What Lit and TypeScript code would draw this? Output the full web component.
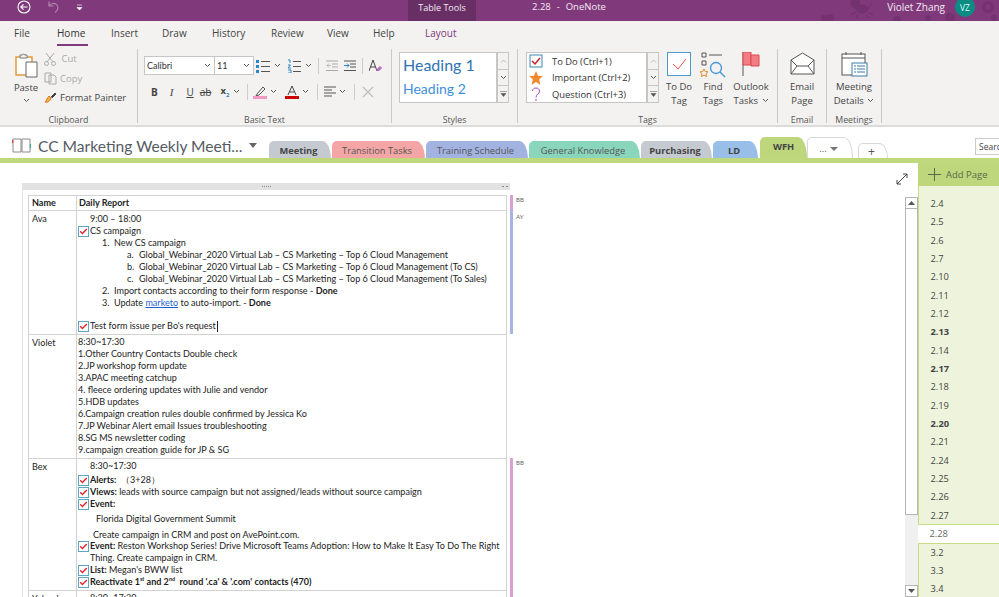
import { LitElement, html, css, svg } from "lit";
import { customElement } from "lit/decorators.js";

const chev = html`<svg class="chev" width="7" height="5" viewBox="0 0 7 5"><path d="M1 1l2.500 2.500L6 1" fill="none" stroke="#555" stroke-width="1"/></svg>`;
const check = html`<svg class="chk" width="11" height="11" viewBox="0 0 11 11"><rect x=".5" y=".5" width="10" height="10" fill="#fff" stroke="#5ba6c4"/><path d="M2.200 5.200l2.200 2.400 4.400-4.600" fill="none" stroke="#e0262e" stroke-width="1.400"/></svg>`;
const scrollBtns = html`<div class="gs"><i><svg width="7" height="4" viewBox="0 0 7 4"><path d="M1 3.500L3.500 1 6 3.500" fill="none" stroke="#bbb"/></svg></i><i>${chev}</i><i><svg width="7" height="6" viewBox="0 0 7 6"><path d="M0 .5h7M1 2.500h5L3.500 5.500z" fill="#555" stroke="#555" stroke-width=".5"/></svg></i></div>`;

const pages: [string, string?][] = [
  ["2.4"],["2.5"],["2.6"],["2.7"],["2.10"],["2.11"],["2.12"],["2.13","b"],["2.14"],["2.17","b"],["2.18"],["2.19"],["2.20","b"],["2.21"],["2.24"],["2.25"],["2.26"],["2.27"],["2.28","cur"],["3.2"],["3.3"],["3.4"],
];
const tabs = [
  ["Meeting", "#c5cad1", 62, true],
  ["Transition Tasks", "#f4a6a6", 93, false],
  ["Training Schedule", "#a2b3e2", 102, false],
  ["General Knowledge", "#8ad6bd", 111, false],
  ["Purchasing", "#c5cad1", 71, true],
  ["LD", "#99bfe8", 45, true],
] as [string, string, number, boolean][];
const menu: [string, number, string?][] = [
  ["File", 43], ["Home", 31, "on"], ["Insert", 51, "ins"], ["Draw", 50], ["History", 59], ["Review", 56], ["View", 46], ["Help", 52], ["Layout", 40, "lay"],
];

@customElement("app-root")
export class AppRoot extends LitElement {
  static styles = css`
    :host { display: block; width: 999px; height: 597px; overflow: hidden; background: #fff; font-family: "Open Sans", "Liberation Sans", sans-serif; color: #444; }
    * { box-sizing: border-box; }
    svg { display: block; flex: none; }
    .title { height: 21px; background: #80397b; position: relative; display: flex; color: #f4eaf3; font-size: 9.5px; overflow: hidden; }
    .title > div { position: relative; }
    .title > .doodle { position: absolute; left: 800px; top: 0; }
    .qat { display: flex; align-items: center; gap: 16px; padding: 0 0 7px 17px; width: 408px; }
    .tt { width: 68px; height: 21px; background: #682f65; display: flex; align-items: center; justify-content: center; font-size: 9px; padding-bottom: 7px; }
    .doc { margin-left: 56px; line-height: 13px; word-spacing: 0.5px; }
    .user { margin-left: auto; display: flex; align-items: flex-start; gap: 10px; padding-right: 24px; font-size: 10px; line-height: 15px; }
    .vz { width: 20px; height: 20px; border-radius: 50%; background: #0b8c83; color: #dff; font-size: 8.5px; display: flex; align-items: center; justify-content: center; margin-top: -3px; }
    .menu { height: 25px; background: #f3f2f1; display: flex; padding-left: 14px; font-size: 10px; color: #444; }
    .menu span { height: 25px; line-height: 24px; position: relative; flex: none; }
    .menu .on { color: #333; }
    .menu .on::after { content: ""; position: absolute; left: 0; right: 0; bottom: 0; height: 2px; background: #80397b; }
    .menu .ins { margin-left: 23px; }
    .menu .lay { color: #80397b; }
    .ribbon { height: 81px; background: #f3f2f1; border-bottom: 2px solid #dcdcdc; display: flex; font-size: 9.5px; color: #444; }
    .grp { height: 74px; margin-top: 3px; border-right: 1px solid #c9c9c9; display: flex; flex-direction: column; flex: none; }
    .grp .body { height: 60px; flex: none; display: flex; }
    .grp .lab { height: 13px; margin-top: 5px; text-align: center; font-size: 8.8px; color: #555; line-height: 12px; }
    .g-clip { width: 138px; } .g-basic { width: 254px; } .g-styles { width: 126px; } .g-tags { width: 260px; } .g-email { width: 49px; } .g-meet { width: 55px; }
    .g-styles .body { padding-left: 7px; }
    .g-tags .body { padding-left: 8px; }
    .g-email .body, .g-meet .body { justify-content: center; }
    .paste { width: 40px; margin-left: 6px; display: flex; flex-direction: column; align-items: center; padding-top: 3px; font-size: 9.5px; }
    .paste span { margin-top: 3px; }
    .paste .chev { margin-top: 4px; }
    .clipc { display: flex; flex-direction: column; font-size: 9.5px; margin-left: -2px; }
    .clipc div { height: 19.5px; display: flex; align-items: center; gap: 3px; }
    .dis { color: #aaa; }
    .bt { padding: 7px 0 0 6px; display: flex; flex-direction: column; gap: 7px; }
    .bt .r { display: flex; align-items: center; height: 19px; }
    .sel { height: 19px; background: #fff; border: 1px solid #c6c6c6; display: flex; align-items: center; justify-content: space-between; font-size: 9px; padding: 0 3px 0 2px; font-family: "Lato", sans-serif; color: #333; }
    .sel.f { width: 71px; } .sel.s { width: 39px; border-left: 0; }
    .vs { width: 1px; height: 16px; background: #ccc; flex: none; }
    .c1 { margin: 0 6px 0 4px; }
    .c2 { margin: 0 8px 0 3px; }
    .c3 { margin: 0 8px 0 2px; }
    .c0 { margin: 0 7px 0 4px; }
    .ml2 { margin-left: 2px; } .ml5 { margin-left: 5px; } .ml6 { margin-left: 6px; } .ml7 { margin-left: 7px; }
    .vm { margin: 0 6px 0 5px; }
    .fb { margin-left: 7px; font-size: 10px; font-weight: 700; }
    .fi { margin-left: 12px; font-family: "Liberation Serif", serif; font-size: 11px; font-style: italic; }
    .fu { margin-left: 13px; font-size: 10px; text-decoration: underline; }
    .fs { margin-left: 6px; font-size: 10px; text-decoration: line-through; }
    .fx { margin-left: 9px; font-size: 9.5px; font-weight: 700; }
    .fx sub { font-size: 6px; color: #2e86c8; }
    .gal { background: #fff; border: 1px solid #c6c6c6; height: 51px; margin-top: 3px; flex: none; }
    .gal.st { width: 98px; }
    .gal.tl { width: 121px; }
    .h1 { font-family: "Lato", sans-serif; font-size: 16px; color: #2e74b5; line-height: 23px; padding-left: 3px; }
    .h2 { font-family: "Lato", sans-serif; font-size: 14px; color: #3f8fd8; line-height: 26px; padding-left: 3px; }
    .gs { width: 12px; height: 51px; margin-top: 3px; border: 1px solid #c6c6c6; display: flex; flex-direction: column; background: #f3f2f1; flex: none; }
    .gs i { flex: 1; display: flex; align-items: center; justify-content: center; border-bottom: 1px solid #c6c6c6; font-style: normal; }
    .gs i:last-child { border-bottom: 0; }
    .tg { display: flex; align-items: center; height: 16.5px; font-size: 9.4px; color: #333; gap: 9px; padding-left: 2px; }
    .big { display: flex; flex-direction: column; align-items: center; text-align: center; line-height: 13.5px; font-size: 9.5px; padding-top: 3px; flex: none; }
    .big .ico { height: 28px; display: flex; align-items: flex-start; }
    .big .chev { display: inline-block; margin: 0 0 1px 1px; }
    .b-todo { width: 34px; margin-left: 3px; }
    .b-find { width: 34px; }
    .b-out { width: 42px; }
    .nb { height: 36px; position: relative; display: flex; align-items: flex-end; border-bottom: 5px solid #c0d87c; }
    .nbt { width: 269px; flex: none; display: flex; align-items: center; height: 31px; padding-left: 12px; font-size: 15.6px; color: #565b64; font-family: "Lato", sans-serif; gap: 7px; align-self: flex-start; margin-top: 3px; white-space: nowrap; }
    .tab { height: 17px; border-radius: 5px 9px 0 0 / 5px 100% 0 0; font-size: 9.3px; color: #555; display: flex; align-items: center; justify-content: center; margin-right: 1px; flex: none; padding: 1px 3px 0 0; }
    .tab.b { font-weight: 700; color: #444; }
    .tab.wfh { height: 21px; width: 47px; background: #bed77c; font-weight: 700; color: #444; margin-left: 1px; margin-right: 0; padding: 0 0 3px; }
    .tab.more { height: 21px; width: 46px; background: #fff; border: 1px solid #d8d8d8; border-bottom: 0; gap: 3px; margin-right: 5px; }
    .tab.plus { height: 15px; width: 30px; background: #fff; border: 1px solid #d8d8d8; border-bottom: 0; font-size: 12px; }
    .search { position: absolute; left: 975px; top: 11px; width: 30px; height: 17px; border: 1px solid #ccc; background: #fff; font-size: 8.5px; line-height: 15px; padding-left: 3px; }
    .main { display: flex; height: 434px; }
    .page { flex: 1; position: relative; display: flex; padding: 20px 0 0 22px; min-width: 0; }
    .expand { position: absolute; left: 896px; top: 10px; }
    .oc { width: 488px; height: 414px; border-left: 1px solid #e4e4e4; flex: none; }
    .hand { height: 7px; background: #e2e2e2; display: flex; justify-content: center; align-items: center; gap: 1px; position: relative; }
    .hand b { width: 1px; height: 1px; background: #888; }
    .hand em { position: absolute; right: 2px; top: 3px; width: 6px; height: 1px; border-left: 2px solid #888; border-right: 2px solid #888; }
    table { border-collapse: collapse; margin: 5px 0 0 5px; width: 479px; table-layout: fixed; font-family: "Lato", sans-serif; font-size: 9.05px; color: #222; }
    td { border: 1px solid #d2d2d2; padding: 1px 0 1px 1px; vertical-align: top; }
    td.n { width: 48px; padding-left: 3px; padding-top: 2px; }
    tr.hd td { height: 15px; padding-top: 0; line-height: 13px; }
    tr.hd .l { padding-left: 1px; height: 13px; }
    tr.ava td:last-child { padding-top: 2px; height: 124px; }
    tr.vio td:last-child { height: 124px; }
    tr.bex td:last-child { height: 132px; }
    .l { display: flex; height: 12px; line-height: 12px; white-space: pre; align-items: center; }
    .l .chk { margin-right: 1px; }
    .l.short { height: 11px; }
    .i0 { padding-left: 12px; }
    .i1 { padding-left: 24px; }
    .i2 { padding-left: 49px; }
    .num { display: inline-block; width: 12px; }
    .a { color: #1f5fd0; text-decoration: underline; }
    sup { font-size: 5.5px; line-height: 0; }
    .s2 { height: 2px; } .s4 { height: 4px; } .s3 { height: 3px; }
    .flo { padding-left: 18px; } .cre { padding-left: 15px; }
    .caret { display: inline-block; width: 1px; height: 11px; background: #222; vertical-align: middle; margin-left: 1px; }
    .auth { width: 30px; margin-top: 12px; flex: none; font-family: "Lato", sans-serif; font-size: 6px; color: #666; }
    .auth div { border-left: 3px solid transparent; padding-left: 3px; }
    .auth .bb { height: 15px; border-color: #d9a0d4; padding-top: 1px; }
    .auth .ay { height: 124px; border-color: #a4b5e3; padding-top: 3px; }
    .auth .gap { height: 124px; }
    .auth .bb2 { height: 140px; border-color: #d9a0d4; padding-top: 1px; }
    .scroll { position: absolute; left: 905px; top: 34px; bottom: 0; width: 13px; background: #f0f0f0; display: flex; flex-direction: column; }
    .sb { height: 12px; background: #fff; border: 1px solid #b5b5b5; display: flex; align-items: center; justify-content: center; flex: none; }
    .th { height: 306px; background: #fff; border: 1px solid #b5b5b5; border-top: 0; flex: none; }
    .sp { flex: 1; }
    .side { width: 81px; flex: none; font-size: 9.3px; color: #444; }
    .add { height: 23px; background: #bed77c; display: flex; align-items: center; gap: 5px; padding-left: 10px; font-size: 9.5px; color: #5a6a48; }
    .top { height: 9px; background: #eef4dc; border-left: 1px solid #c5db87; }
    .pg { height: 18.33px; line-height: 18px; padding-left: 11.5px; background: #eef4dc; border-left: 1px solid #c5db87; }
    .pg.b { font-weight: 700; }
    .pg.cur { background: #fff; color: #666; border-left: 0; }
    .pg.lastb { border-bottom: 1px solid #c5db87; }
    .pg.firstb { border-top: 1px solid #c5db87; }
  `;

  doodles() {
    const c = "#743270";
    return html`<svg class="doodle" width="199" height="21" viewBox="0 0 199 21">
      ${[[24, 18, 3], [30, 18, 4], [55, 3, 5], [97, 20, 4], [128, 18, 3], [150, 18, 5], [188, 7, 6], [194, 18, 3]].map(
        ([x, y, r]) => svg`<circle cx=${x} cy=${y} r=${r} fill=${c}/>`
      )}
      <circle cx="188" cy="7" r="2.500" fill="#80397b"/>
      <ellipse cx="62" cy="9" rx="6" ry="4.500" fill=${c}/>
      <path d="M56 9l-5-5M68 9l4-6M56 12l-5 3M68 12l5 3M58 14l-2 4M66 14l2 4" stroke=${c} fill="none" stroke-width="1.200"/>
    </svg>`;
  }

  render() {
    return html`
      <div class="title">
        ${this.doodles()}
        <div class="qat">
          <svg width="14" height="14" viewBox="0 0 14 14"><circle cx="7" cy="7" r="6" fill="none" stroke="#fff" stroke-width="1.100"/><path d="M10.500 7H4M6.500 4.300L3.800 7l2.700 2.700" fill="none" stroke="#fff" stroke-width="1.100"/></svg>
          <svg width="13" height="14" viewBox="0 0 13 14"><path d="M2 1.500v4.500h4.500M2.200 6C4 3 8 2.500 10 5c2 2.700.5 6-2 7.500" fill="none" stroke="#b289af" stroke-width="1.100"/></svg>
          <svg width="7" height="7" viewBox="0 0 7 7"><path d="M1 1h5M1 3.500h5l-2.500 2.500z" fill="#fff" stroke="#fff" stroke-width=".6"/></svg>
        </div>
        <div class="tt">Table Tools</div>
        <div class="doc">2.28&nbsp; -&nbsp; OneNote</div>
        <div class="user"><span>Violet Zhang</span><div class="vz">VZ</div></div>
      </div>
      <div class="menu">
        ${menu.map(([t, w, c]) => html`<span class=${c ?? ""} style="width:${w}px">${t}</span>`)}
      </div>
      ${this.ribbon()}
      <div class="nb">
        <div class="nbt">
          <svg width="19" height="15" viewBox="0 0 19 15"><path d="M1 1h8v13H1zM10 1h8v13h-8z" fill="#fff" stroke="#8a8a8a"/><path d="M.5 2v3" stroke="#d33" stroke-width="1.200"/><path d="M18.500 6v4" stroke="#3a9" stroke-width="1.200"/></svg>
          <span>CC Marketing Weekly Meeti...</span>
          <svg width="9" height="5" viewBox="0 0 9 5"><path d="M0 0h8L4 5z" fill="#666"/></svg>
        </div>
        ${tabs.map(([t, c, w, b]) => html`<div class="tab ${b ? "b" : ""}" style="width:${w}px;background:${c}">${t}</div>`)}
        <div class="tab wfh">WFH</div>
        <div class="tab more">...<svg width="8" height="4" viewBox="0 0 8 4"><path d="M0 0h8L4 4z" fill="#777"/></svg></div>
        <div class="tab plus">+</div>
        <div class="search">Search</div>
      </div>
      <div class="main">
        <div class="page">
          <svg class="expand" width="12" height="12" viewBox="0 0 12 12"><path d="M1 11L11 1M7 1h4v4M1 7v4h4" fill="none" stroke="#444"/></svg>
          <div class="oc">
            <div class="hand"><b></b><b></b><b></b><b></b><b></b><em></em></div>
            ${this.table()}
          </div>
          <div class="auth">
            <div class="bb">BB</div><div class="ay">AY</div><div class="gap"></div><div class="bb2">BB</div>
          </div>
          <div class="scroll">
            <div class="sb"><svg width="7" height="4" viewBox="0 0 7 4"><path d="M0 4h7L3.500 0z" fill="#555"/></svg></div>
            <div class="th"></div><div class="sp"></div>
            <div class="sb"><svg width="7" height="4" viewBox="0 0 7 4"><path d="M0 0h7L3.500 4z" fill="#555"/></svg></div>
          </div>
        </div>
        <div class="side">
          <div class="add"><svg width="13" height="13" viewBox="0 0 13 13"><path d="M6.500 0v13M0 6.500h13" stroke="#5a6a48"/></svg>Add Page</div>
          <div class="top"></div>
          ${pages.map(([p, k], i) => html`<div class="pg ${k ?? ""} ${i === 17 ? "lastb" : ""} ${i === 19 ? "firstb" : ""}">${p}</div>`)}
        </div>
      </div>
    `;
  }

  table() {
    const L = (c: string, x: unknown) => html`<div class="l ${c}">${x}</div>`;
    const C = (x: unknown) => html`<div class="l">${check}<span>${x}</span></div>`;
    const N = (c: string, n: string, x: unknown) => html`<div class="l ${c}"><span class="num">${n}</span><span>${x}</span></div>`;
    return html`<table>
      <tr class="hd"><td class="n"><b>Name</b></td><td><div class="l"><b>Daily Report</b></div></td></tr>
      <tr class="ava"><td class="n">Ava</td><td>
        ${L("i0", "9:00 – 18:00")}
        ${C("CS campaign")}
        ${N("i1", "1.", "New CS campaign")}
        ${N("i2", "a.", "Global_Webinar_2020 Virtual Lab – CS Marketing – Top 6 Cloud Management")}
        ${N("i2", "b.", "Global_Webinar_2020 Virtual Lab – CS Marketing – Top 6 Cloud Management (To CS)")}
        ${N("i2", "c.", "Global_Webinar_2020 Virtual Lab – CS Marketing – Top 6 Cloud Management (To Sales)")}
        ${N("i1", "2.", html`Import contacts according to their form response - <b>Done</b>`)}
        ${N("i1", "3.", html`Update <span class="a">marketo</span> to auto-import. - <b>Done</b>`)}
        ${L("short", "")}
        ${C(html`Test form issue per Bo's request<i class="caret"></i>`)}
      </td></tr>
      <tr class="vio"><td class="n">Violet</td><td>
        ${["8:30~17:30","1.Other Country Contacts Double check","2.JP workshop form update","3.APAC meeting catchup","4. fleece ordering updates with Julie and vendor","5.HDB updates","6.Campaign creation rules double confirmed by Jessica Ko","7.JP Webinar Alert email Issues troubleshooting","8.SG MS newsletter coding","9.campaign creation guide for JP & SG"].map((t) => L("", t))}
      </td></tr>
      <tr class="bex"><td class="n">Bex</td><td>
        ${L("i0", "8:30~17:30")}
        <div class="s2"></div>
        ${C(html`<b>Alerts:</b>&nbsp; （3+28）`)}
        ${C(html`<b>Views:</b> leads with source campaign but not assigned/leads without source campaign`)}
        ${C(html`<b>Event:</b>`)}
        <div class="s3"></div>
        ${L("", html`<span class="flo">Florida Digital Government Summit</span>`)}
        <div class="s4"></div>
        ${L("short", html`<span class="cre">Create campaign in CRM and post on AvePoint.com.</span>`)}
        ${C(html`<b>Event:</b> Reston Workshop Series! Drive Microsoft Teams Adoption: How to Make It Easy To Do The Right`)}
        ${L("i0", "Thing. Create campaign in CRM.")}
        ${C(html`<b>List:</b> Megan's BWW list`)}
        ${C(html`<b>Reactivate 1<sup>st</sup> and 2<sup>nd</sup>&nbsp; round '.ca' &amp; '.com' contacts (470)</b>`)}
      </td></tr>
      <tr><td class="n">Yolanda</td><td>${L("i0", "8:30~17:30")}</td></tr>
    </table>`;
  }

  ribbon() {
    return html`<div class="ribbon">
      <div class="grp g-clip"><div class="body">
        <div class="paste">
          <svg width="26" height="26" viewBox="0 0 26 26"><path d="M3 5h16v18H3z" fill="#fff" stroke="#e39a3c" stroke-width="1.500"/><path d="M7 5V3h2a2 2 0 0 1 3 0h2v3H7z" fill="#f3f2f1" stroke="#777"/><path d="M13 10h11v15H13z" fill="#fff" stroke="#666"/></svg>
          <span>Paste</span>${chev}
        </div>
        <div class="clipc">
          <div class="dis"><svg width="12" height="14" viewBox="0 0 12 14"><path d="M2 1l7 9M10 1l-7 9" stroke="#aaa" fill="none"/><circle cx="2.500" cy="11.500" r="2" fill="none" stroke="#aaa"/><circle cx="9.500" cy="11.500" r="2" fill="none" stroke="#aaa"/></svg>&nbsp;Cut</div>
          <div class="dis"><svg width="13" height="13" viewBox="0 0 13 13"><path d="M1 1h6v9H1zM5 3h5l2 2v7H5z" fill="#f3f2f1" stroke="#aaa"/></svg>Copy</div>
          <div><svg width="13" height="13" viewBox="0 0 13 13"><path d="M1 11c3 1 5-1 6-4L5 5c-2 2-2 4-4 6z" fill="#f5b042" stroke="#d9772a"/><path d="M7 6l4-4 1 1-4 4" fill="#444" stroke="#444"/></svg>Format Painter</div>
        </div>
      </div><div class="lab">Clipboard</div></div>

      <div class="grp g-basic"><div class="body"><div class="bt">
        <div class="r">
          <div class="sel f">Calibri${chev}</div>
          <div class="sel s">11${chev}</div>
          <svg class="ml2" width="14" height="14" viewBox="0 0 14 14"><path d="M0 1h3v3H0zM0 6h3v3H0zM0 11h3v3H0z" fill="#2e86c8"/><path d="M5 2.500h9M5 7.500h9M5 12.500h9" stroke="#555"/></svg>
          <span class="c1">${chev}</span>
          <svg width="14" height="14" viewBox="0 0 14 14"><path d="M1 1h2v3M1 6h2.500L1 9h3M1 11h3v3H1" fill="none" stroke="#2e86c8"/><path d="M6 2.500h8M6 7.500h8M6 12.500h8" stroke="#555"/></svg>
          <span class="c1">${chev}</span>
          <div class="vs"></div>
          <svg class="ml7" width="13" height="12" viewBox="0 0 13 12"><path d="M0 1h12M6 4h6M6 7h6M0 10.500h12" stroke="#aaa"/><path d="M5 5.500H1l2-2M1 5.500l2 2" fill="none" stroke="#bbb"/></svg>
          <svg class="ml5" width="13" height="12" viewBox="0 0 13 12"><path d="M0 1h12M6 4h6M6 7h6M0 10.500h12" stroke="#555"/><path d="M0 5.500h5M3 3.500l2 2-2 2" fill="none" stroke="#2e86c8"/></svg>
          <div class="vs vm"></div>
          <svg width="14" height="14" viewBox="0 0 14 14"><path d="M0 12L4 1l4 11M1.500 8h5" fill="none" stroke="#444"/><path d="M7 11l4-4 2 2-3 3H8z" fill="#b86bc9"/></svg>
        </div>
        <div class="r">
          <span class="fb">B</span><span class="fi">I</span><span class="fu">U</span><span class="fs">ab</span>
          <span class="fx">x<sub>2</sub></span>
          <span class="c0">${chev}</span>
          <div class="vs"></div>
          <svg class="ml5" width="14" height="14" viewBox="0 0 14 14"><path d="M4 9l6-7 2 2-6 6-3 1z" fill="none" stroke="#555"/><rect y="11" width="14" height="3" fill="#f59ac6"/></svg>
          <span class="c2">${chev}</span>
          <svg width="14" height="14" viewBox="0 0 14 14"><path d="M3 10L7 1l4 9M4.500 7h5" fill="none" stroke="#444"/><rect y="11" width="14" height="3" fill="#c00"/></svg>
          <span class="c2">${chev}</span>
          <div class="vs"></div>
          <svg class="ml6" width="13" height="12" viewBox="0 0 13 12"><path d="M0 1h12M0 4h8M0 7h12M0 10h8" stroke="#555"/></svg>
          <span class="c3">${chev}</span>
          <div class="vs"></div>
          <svg class="ml7" width="12" height="12" viewBox="0 0 12 12"><path d="M1 1l10 10M11 1L1 11" stroke="#bbb" stroke-width="1.100"/></svg>
        </div>
      </div></div><div class="lab">Basic Text</div></div>

      <div class="grp g-styles"><div class="body">
        <div class="gal st"><div class="h1">Heading 1</div><div class="h2">Heading 2</div></div>
        ${scrollBtns}
      </div><div class="lab">Styles</div></div>

      <div class="grp g-tags"><div class="body">
        <div class="gal tl">
          <div class="tg"><svg width="14" height="14" viewBox="0 0 14 14"><rect x="1" y="1" width="12" height="12" fill="#fff" stroke="#3b87ad"/><path d="M3 7l3 3 5-6" fill="none" stroke="#c8202d" stroke-width="1.500"/></svg><span>To Do (Ctrl+1)</span></div>
          <div class="tg"><svg width="14" height="14" viewBox="0 0 14 14"><path d="M7 0l2 4.700 5 .4-3.800 3.200L11.400 14 7 11l-4.400 3 1.200-5.700L0 5.100l5-.4z" fill="#ef8a2e"/></svg><span>Important (Ctrl+2)</span></div>
          <div class="tg"><svg width="14" height="14" viewBox="0 0 14 14"><path d="M3.500 4c0-4 7-4 7 0 0 3-3.500 3-3.500 6.500M7 12v2" fill="none" stroke="#a146bd"/></svg><span>Question (Ctrl+3)</span></div>
        </div>
        ${scrollBtns}
        <div class="big b-todo"><div class="ico"><svg width="24" height="24" viewBox="0 0 24 24"><rect x=".5" y=".5" width="23" height="23" fill="#fff" stroke="#4a9bc9"/><path d="M6 12l5 5 8-10" fill="none" stroke="#ef5350"/></svg></div>To Do<br>Tag</div>
        <div class="big b-find"><div class="ico"><svg width="26" height="26" viewBox="0 0 26 26"><path d="M2 1h4v4H2zM2 9h4v4H2z" fill="none" stroke="#555"/><path d="M9 3h13" stroke="#555"/><circle cx="16" cy="16" r="5.500" fill="none" stroke="#3a93d0" stroke-width="1.300"/><path d="M20 20l5 5" stroke="#3a93d0" stroke-width="1.300"/><path d="M4 17l1.200 2.500 2.800.3-2 1.900.5 2.800L4 23.200 1.500 24.500 2 21.700 0 19.800l2.800-.3z" fill="none" stroke="#e08a2e"/></svg></div>Find<br>Tags</div>
        <div class="big b-out"><div class="ico"><svg width="18" height="24" viewBox="0 0 18 24"><path d="M1 0v24" stroke="#555"/><path d="M1 0h8v13H1z" fill="#f47c82" stroke="#d84a50"/><path d="M9 3h8v11H9z" fill="#f47c82" stroke="#d84a50"/></svg></div><span>Outlook<br>Tasks ${chev}</span></div>
      </div><div class="lab">Tags</div></div>

      <div class="grp g-email"><div class="body">
        <div class="big"><div class="ico"><svg width="25" height="24" viewBox="0 0 25 24"><path d="M1 8l11.500-7L24 8v14H1z" fill="#fff" stroke="#555"/><path d="M1 8l6 6h11l6-6M1 22l6-8M24 22l-6-8" fill="none" stroke="#555"/></svg></div>Email<br>Page</div>
      </div><div class="lab">Email</div></div>

      <div class="grp g-meet"><div class="body">
        <div class="big"><div class="ico"><svg width="27" height="26" viewBox="0 0 27 26"><rect x="1" y="2" width="23" height="21" fill="#fff" stroke="#555"/><path d="M1 6h23M5 0v3M20 0v3" stroke="#555"/><rect x="11" y="11" width="15" height="13" fill="#fff" stroke="#3a7ca5"/><path d="M13 14h2M16 14h8M13 17h2M16 17h8M13 20h2M16 20h8" stroke="#3a7ca5"/></svg></div><span>Meeting<br>Details ${chev}</span></div>
      </div><div class="lab">Meetings</div></div>
    </div>`;
  }
}
